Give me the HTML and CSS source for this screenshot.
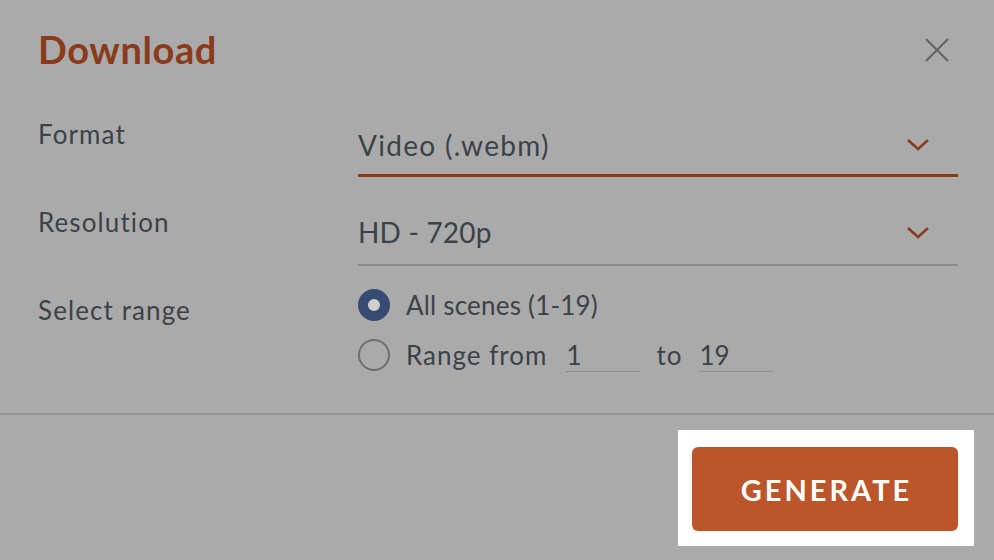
FILE: index.html
```html
<!DOCTYPE html>
<html>
<head>
<meta charset="utf-8">
<link rel="stylesheet" href="styles.css">
</head>
<body>
<div class="dialog">
  <div class="header">
    <h1 class="title">Download</h1>
    <button class="close" aria-label="Close">
      <svg width="24" height="24" viewBox="0 0 24 24"><path d="M1 1L23 23M23 1L1 23" stroke="#5f6267" stroke-width="2" fill="none"/></svg>
    </button>
  </div>
  <div class="form">
    <div class="label label-format">Format</div>
    <div class="select select-active">
      <span class="select-text">Video (.webm)</span>
      <svg class="chev" width="24" height="14" viewBox="0 0 24 14"><path d="M2 2L12 11L22 2" stroke="#8a3b1c" stroke-width="2.5" fill="none"/></svg>
    </div>
    <div class="label label-res">Resolution</div>
    <div class="select select-res">
      <span class="select-text select-text-res">HD - 720p</span>
      <svg class="chev" width="24" height="14" viewBox="0 0 24 14"><path d="M2 2L12 11L22 2" stroke="#8a3b1c" stroke-width="2.5" fill="none"/></svg>
    </div>
    <div class="label label-range">Select range</div>
    <div class="radios">
      <div class="radio-row">
        <span class="radio radio-on"></span>
        <span class="radio-text radio-all">All scenes (1-19)</span>
      </div>
      <div class="radio-row">
        <span class="radio"></span>
        <span class="radio-text">Range from</span>
        <span class="num num-from">1</span>
        <span class="radio-text to">to</span>
        <span class="num">19</span>
      </div>
    </div>
  </div>
  <div class="divider"></div>
  <div class="footer">
    <div class="focus">
      <button class="generate">GENERATE</button>
    </div>
  </div>
</div>
</body>
</html>
```
FILE: styles.css
```css
html, body {
  margin: 0;
  padding: 0;
  background: #aaaaaa;
  width: 994px;
  height: 560px;
  overflow: hidden;
}
body {
  font-family: Lato, "Liberation Sans", sans-serif;
  color: #3b4248;
}
.dialog {
  display: flex;
  flex-direction: column;
}
.header {
  display: flex;
  justify-content: space-between;
  align-items: flex-start;
  padding: 26px 45px 0 38px;
  height: 80px;
  box-sizing: border-box;
}
.title {
  margin: 0;
  font-size: 38px;
  line-height: 46px;
  font-weight: 700;
  letter-spacing: 0.6px;
  color: #8a3b1c;
}
.close {
  margin-top: 12px;
  padding: 0;
  border: 0;
  background: none;
  width: 24px;
  height: 24px;
  display: block;
}
.close svg { display: block; }
.form {
  display: grid;
  grid-template-columns: 320px 600px;
  padding-left: 38px;
}
.label {
  font-size: 26px;
  line-height: 32px;
  letter-spacing: 1.1px;
}
.label-format { padding-top: 38px; }
.label-res { padding-top: 29px; }
.label-range { padding-top: 28px; }
.select {
  display: flex;
  justify-content: space-between;
  align-items: flex-start;
  height: 48px;
  margin-top: 39px;
  border-bottom: 2px solid #8c8c8c;
  padding-right: 28px;
}
.select-active {
  margin-top: 49px;
  height: 45px;
  border-bottom: 3px solid #8a3b1c;
}
.select-text {
  font-size: 28px;
  line-height: 32px;
  letter-spacing: 1.3px;
}
.select-text-res { letter-spacing: 0.2px; }
.chev { display: block; margin-top: 9px; }
.select-res .chev { margin-top: 10px; }
.radios {
  display: flex;
  flex-direction: column;
  gap: 18px;
  padding-top: 23px;
}
.radio-row {
  display: flex;
  align-items: flex-start;
  height: 32px;
}
.radio {
  width: 32px;
  height: 32px;
  box-sizing: border-box;
  border-radius: 50%;
  border: 2px solid #6f6f6f;
  margin-right: 16px;
  flex: none;
}
.radio-on {
  border: 10px solid #374a72;
  background: #cfcfcf;
}
.radio-text {
  font-size: 26px;
  line-height: 32px;
  letter-spacing: 1px;
}
.radio-all { letter-spacing: 0.2px; }
.num {
  width: 74px;
  box-sizing: border-box;
  font-size: 26px;
  line-height: 32px;
  border-bottom: 1px solid #8c8c8c;
  height: 33px;
}
.num-from { margin-left: 19px; margin-right: 16px; }
.to { margin-right: 17px; }
.divider {
  height: 2px;
  background: #929292;
  margin-top: 42px;
}
.footer {
  display: flex;
  justify-content: flex-end;
  padding: 15px 20px 0 0;
}
.focus {
  background: #ffffff;
  padding: 17px 16px 15px 14px;
}
.generate {
  display: block;
  width: 266px;
  height: 84px;
  border: 0;
  border-radius: 6px;
  background: #bc562a;
  color: #ffffff;
  font-family: Lato, "Liberation Sans", sans-serif;
  font-weight: 700;
  font-size: 29px;
  letter-spacing: 3px;
  padding: 0 0 0 3px;
}
```
